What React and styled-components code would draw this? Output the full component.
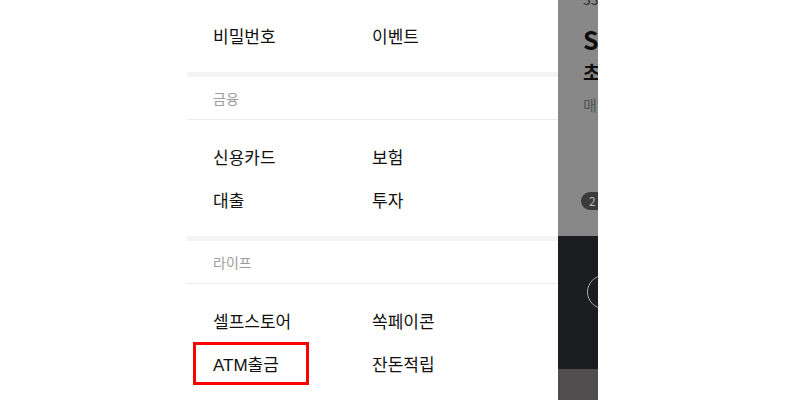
import React from "react";
import styled, { createGlobalStyle } from "styled-components";

const Global = createGlobalStyle`
  html, body { margin: 0; padding: 0; background: #fff; }
  body { font-family: "Noto Sans CJK KR", "Noto Sans", sans-serif; }
  * { box-sizing: border-box; }
`;

const Page = styled.div`
  display: flex;
  height: 100vh;
  overflow: hidden;
  background: #fff;
`;

const Spacer = styled.div`
  width: 187px;
  flex-shrink: 0;
`;

const Menu = styled.nav`
  width: 371px;
  flex-shrink: 0;
  background: #fff;
  display: flex;
  flex-direction: column;
`;

const Grid = styled.div`
  display: grid;
  grid-template-columns: 159px 1fr;
  padding: ${(p) => (p.$first ? "14px" : "15px")} 0 15px 6px;
`;

const Item = styled.a`
  justify-self: start;
  display: inline-flex;
  align-items: center;
  height: 43px;
  padding: 0 20px;
  width: ${(p) => (p.$active ? "116px" : "auto")};
  font-family: "Liberation Sans", "Noto Sans CJK KR", sans-serif;
  font-size: 17px;
  color: #111;
  text-decoration: none;
  box-shadow: ${(p) => (p.$active ? "inset 0 0 0 3px #ff0000" : "none")};
`;

const Divider = styled.div`
  height: 5px;
  background: #f4f4f4;
`;

const Header = styled.div`
  height: 44px;
  display: flex;
  align-items: center;
  padding-left: 26px;
  font-size: 14px;
  color: #9c9c9c;
  border-bottom: 1px solid #ececec;
`;

const Peek = styled.div`
  width: 40px;
  flex-shrink: 0;
  overflow: hidden;
  display: flex;
  flex-direction: column;
`;

const Dimmed = styled.div`
  height: 236px;
  background: #888888;
  padding-left: 25px;
  display: flex;
  flex-direction: column;
  white-space: nowrap;
`;

const Meta = styled.div`
  margin-top: -9px;
  font-size: 14px;
  line-height: 16px;
  color: #2a2a2a;
`;

const Title = styled.div`
  margin-top: 17px;
  font-size: 25px;
  font-weight: 700;
  line-height: 30px;
  color: #0d0d0d;
`;

const Sub = styled.div`
  margin-top: 5px;
  font-size: 19px;
  font-weight: 700;
  line-height: 26px;
  color: #0d0d0d;
`;

const Desc = styled.div`
  margin-top: 10px;
  font-size: 15px;
  line-height: 20px;
  color: #545454;
`;

const Pill = styled.div`
  margin-top: 77px;
  margin-left: -2px;
  width: 40px;
  height: 18px;
  border-radius: 9px;
  background: #3b3b3b;
  color: #b5b5b5;
  font-size: 12px;
  line-height: 18px;
  padding-left: 8px;
  white-space: pre;
`;

const Dark = styled.div`
  height: 133px;
  background: #1c1d21;
  padding: 39px 0 0 29px;
`;

const Circle = styled.div`
  width: 34px;
  height: 34px;
  border-radius: 50%;
  border: 1.5px solid #a8a8a8;
`;

const Bottom = styled.div`
  flex: 1;
  background: #4f4d4e;
`;

const sections = [
  { items: ["비밀번호", "이벤트"] },
  { title: "금융", items: ["신용카드", "보험", "대출", "투자"] },
  { title: "라이프", items: ["셀프스토어", "쏙페이콘", "ATM출금", "잔돈적립"] },
];

export default function App() {
  return (
    <>
      <Global />
      <Page>
        <Spacer />
        <Menu>
          {sections.map((s, i) => (
            <React.Fragment key={i}>
              {i > 0 && <Divider />}
              {s.title && <Header>{s.title}</Header>}
              <Grid $first={i === 0}>
                {s.items.map((it) => (
                  <Item key={it} href="#" $active={it === "ATM출금"}>
                    {it}
                  </Item>
                ))}
              </Grid>
            </React.Fragment>
          ))}
        </Menu>
        <Peek>
          <Dimmed>
            <Meta>33,000원</Meta>
            <Title>SSG 상품권</Title>
            <Sub>초특가 할인</Sub>
            <Desc>매일 오전 10시</Desc>
            <Pill>{"2  /  5"}</Pill>
          </Dimmed>
          <Dark>
            <Circle />
          </Dark>
          <Bottom />
        </Peek>
      </Page>
    </>
  );
}
